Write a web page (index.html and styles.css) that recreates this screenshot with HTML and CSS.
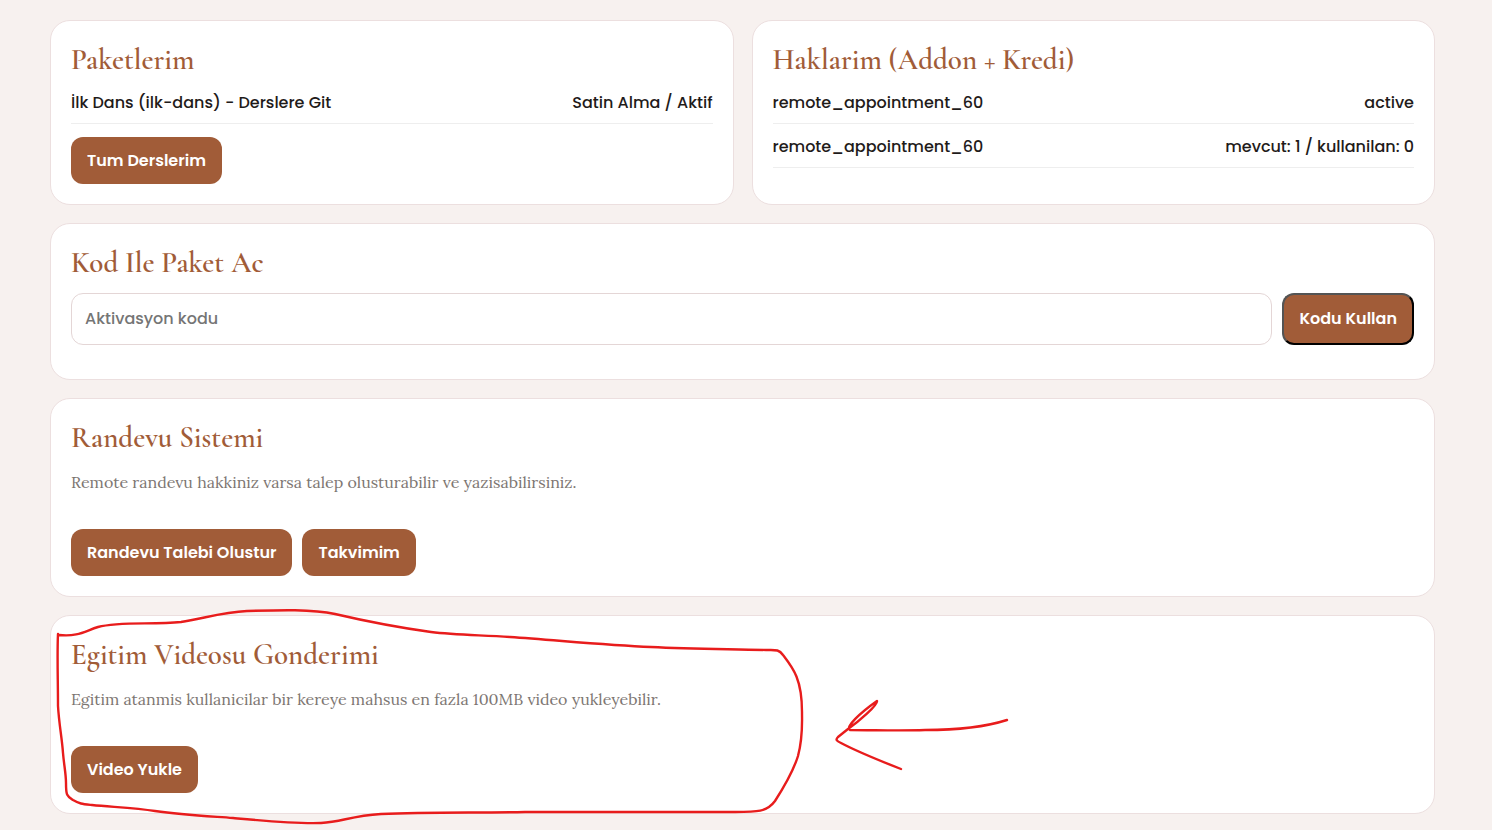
FILE: index.html
```html
<!DOCTYPE html>
<html lang="tr">
<head>
<meta charset="utf-8">
<meta name="viewport" content="width=device-width, initial-scale=1">
<title>Paketlerim</title>
<link rel="stylesheet" href="styles.css">
</head>
<body>
<main class="dashboard">
  <section class="card">
    <h2 class="card-title">Paketlerim</h2>
    <ul class="rows">
      <li class="row"><a class="row-link" href="#">İlk Dans (ilk-dans) - Derslere Git</a><span>Satin Alma / Aktif</span></li>
    </ul>
    <div class="actions"><a class="btn" href="#">Tum Derslerim</a></div>
  </section>

  <section class="card">
    <h2 class="card-title">Haklarim (Addon + Kredi)</h2>
    <ul class="rows">
      <li class="row"><span>remote_appointment_60</span><span>active</span></li>
      <li class="row"><span>remote_appointment_60</span><span>mevcut: 1 / kullanilan: 0</span></li>
    </ul>
  </section>

  <section class="card card-wide">
    <h2 class="card-title">Kod Ile Paket Ac</h2>
    <form class="code-form">
      <input class="code-input" type="text" placeholder="Aktivasyon kodu" aria-label="Aktivasyon kodu">
      <button class="btn btn-submit" type="button">Kodu Kullan</button>
    </form>
  </section>

  <section class="card card-wide">
    <h2 class="card-title">Randevu Sistemi</h2>
    <p class="note">Remote randevu hakkiniz varsa talep olusturabilir ve yazisabilirsiniz.</p>
    <div class="actions actions-spaced">
      <a class="btn" href="#">Randevu Talebi Olustur</a>
      <a class="btn" href="#">Takvimim</a>
    </div>
  </section>

  <section class="card card-wide card-marked">
    <h2 class="card-title">Egitim Videosu Gonderimi</h2>
    <p class="note">Egitim atanmis kullanicilar bir kereye mahsus en fazla 100MB video yukleyebilir.</p>
    <div class="actions actions-spaced"><a class="btn" href="#">Video Yukle</a></div>
    <svg class="marker" viewBox="51 616 960 210" width="960" height="210" aria-hidden="true">
      <path d="M58 634C57 655 58 680 58 706C59 724 62 738 63 753C64 765 66 774 66 783C66 796 67 796 73 800C80 804 82 804 92 805C112 807 135 808 155 811C182 815 205 816 233 818C265 821 295 824 321 823C342 822 350 816 381 814C430 812 480 813 525 812H735C757 812 767 812 775 801C784 787 793 772 798 756C803 737 802 725 802 712C802 679 793 668 783 655C779 649 775 650 766 650C730 649 692 649 651 647C605 645 555 640 510 637C480 635 455 635 431 632C395 627 365 621 335 614C312 609 280 610 247 611C222 612 202 619 181 622C152 625 120 621 98 627C85 631 78 637 59 635"/>
      <path d="M1007 720C985 727 955 730 925 730C900 731 875 730 850 730C845 727 860 713 877 701C878 705 858 722 848 729L838 737C835 740 837 741 841 743C858 752 878 760 901 769"/>
    </svg>
  </section>
</main>
</body>
</html>
```
FILE: styles.css
```css
* { box-sizing: border-box; }

body {
  margin: 0;
  background: #f7f1ef;
  color: #1f1b1a;
  font: 500 16px/27px Poppins, Inter, sans-serif;
}

.dashboard {
  display: grid;
  grid-template-columns: 1fr 1fr;
  gap: 18px;
  padding: 20px 57px 16px 50px;
}

.card {
  padding: 20px;
  background: #fff;
  border: 1px solid #ecdfdf;
  border-radius: 20px;
}

.card-wide { grid-column: 1 / -1; }

.card-marked { position: relative; }

.card-title {
  margin: 0 0 2px;
  color: #a15c38;
  font: 600 29px/37px "Cormorant Garamond", "Liberation Serif", serif;
}

.rows {
  margin: 0;
  padding: 0;
  list-style: none;
}

.row {
  display: flex;
  justify-content: space-between;
  gap: 10px;
  padding: 9px 0 7px;
  border-bottom: 1px solid #eee;
}

.row-link {
  color: inherit;
  text-decoration: none;
}

.actions {
  display: flex;
  flex-wrap: wrap;
  gap: 10px;
  margin-top: 13px;
}

.actions-spaced { margin-top: 33px; }

.btn {
  padding: 10px 16px;
  border-radius: 12px;
  background: #a15c38;
  color: #fff;
  font: 600 16px/27px Poppins, Inter, sans-serif;
  text-decoration: none;
}

.code-form {
  display: flex;
  gap: 10px;
  margin: 12px 0 14px;
}

.code-input {
  flex: 1;
  min-width: 0;
  height: 52px;
  padding: 11px 13px 13px;
  border: 1px solid #e4d6d6;
  border-radius: 12px;
  background: #fff;
  color: inherit;
  font: inherit;
}

.code-input::placeholder { color: #757575; }

.btn-submit {
  padding: 9px 15px 11px;
  border: 2px outset #000;
}

.note {
  margin: 13px 0 0;
  color: #7d7672;
  font: 400 16px/27px Lora, "Liberation Serif", serif;
}

.marker {
  position: absolute;
  top: 0;
  left: 0;
  overflow: visible;
  pointer-events: none;
  fill: none;
  stroke: #e81c1c;
  stroke-width: 2.4;
  stroke-linecap: round;
  stroke-linejoin: round;
}
```
